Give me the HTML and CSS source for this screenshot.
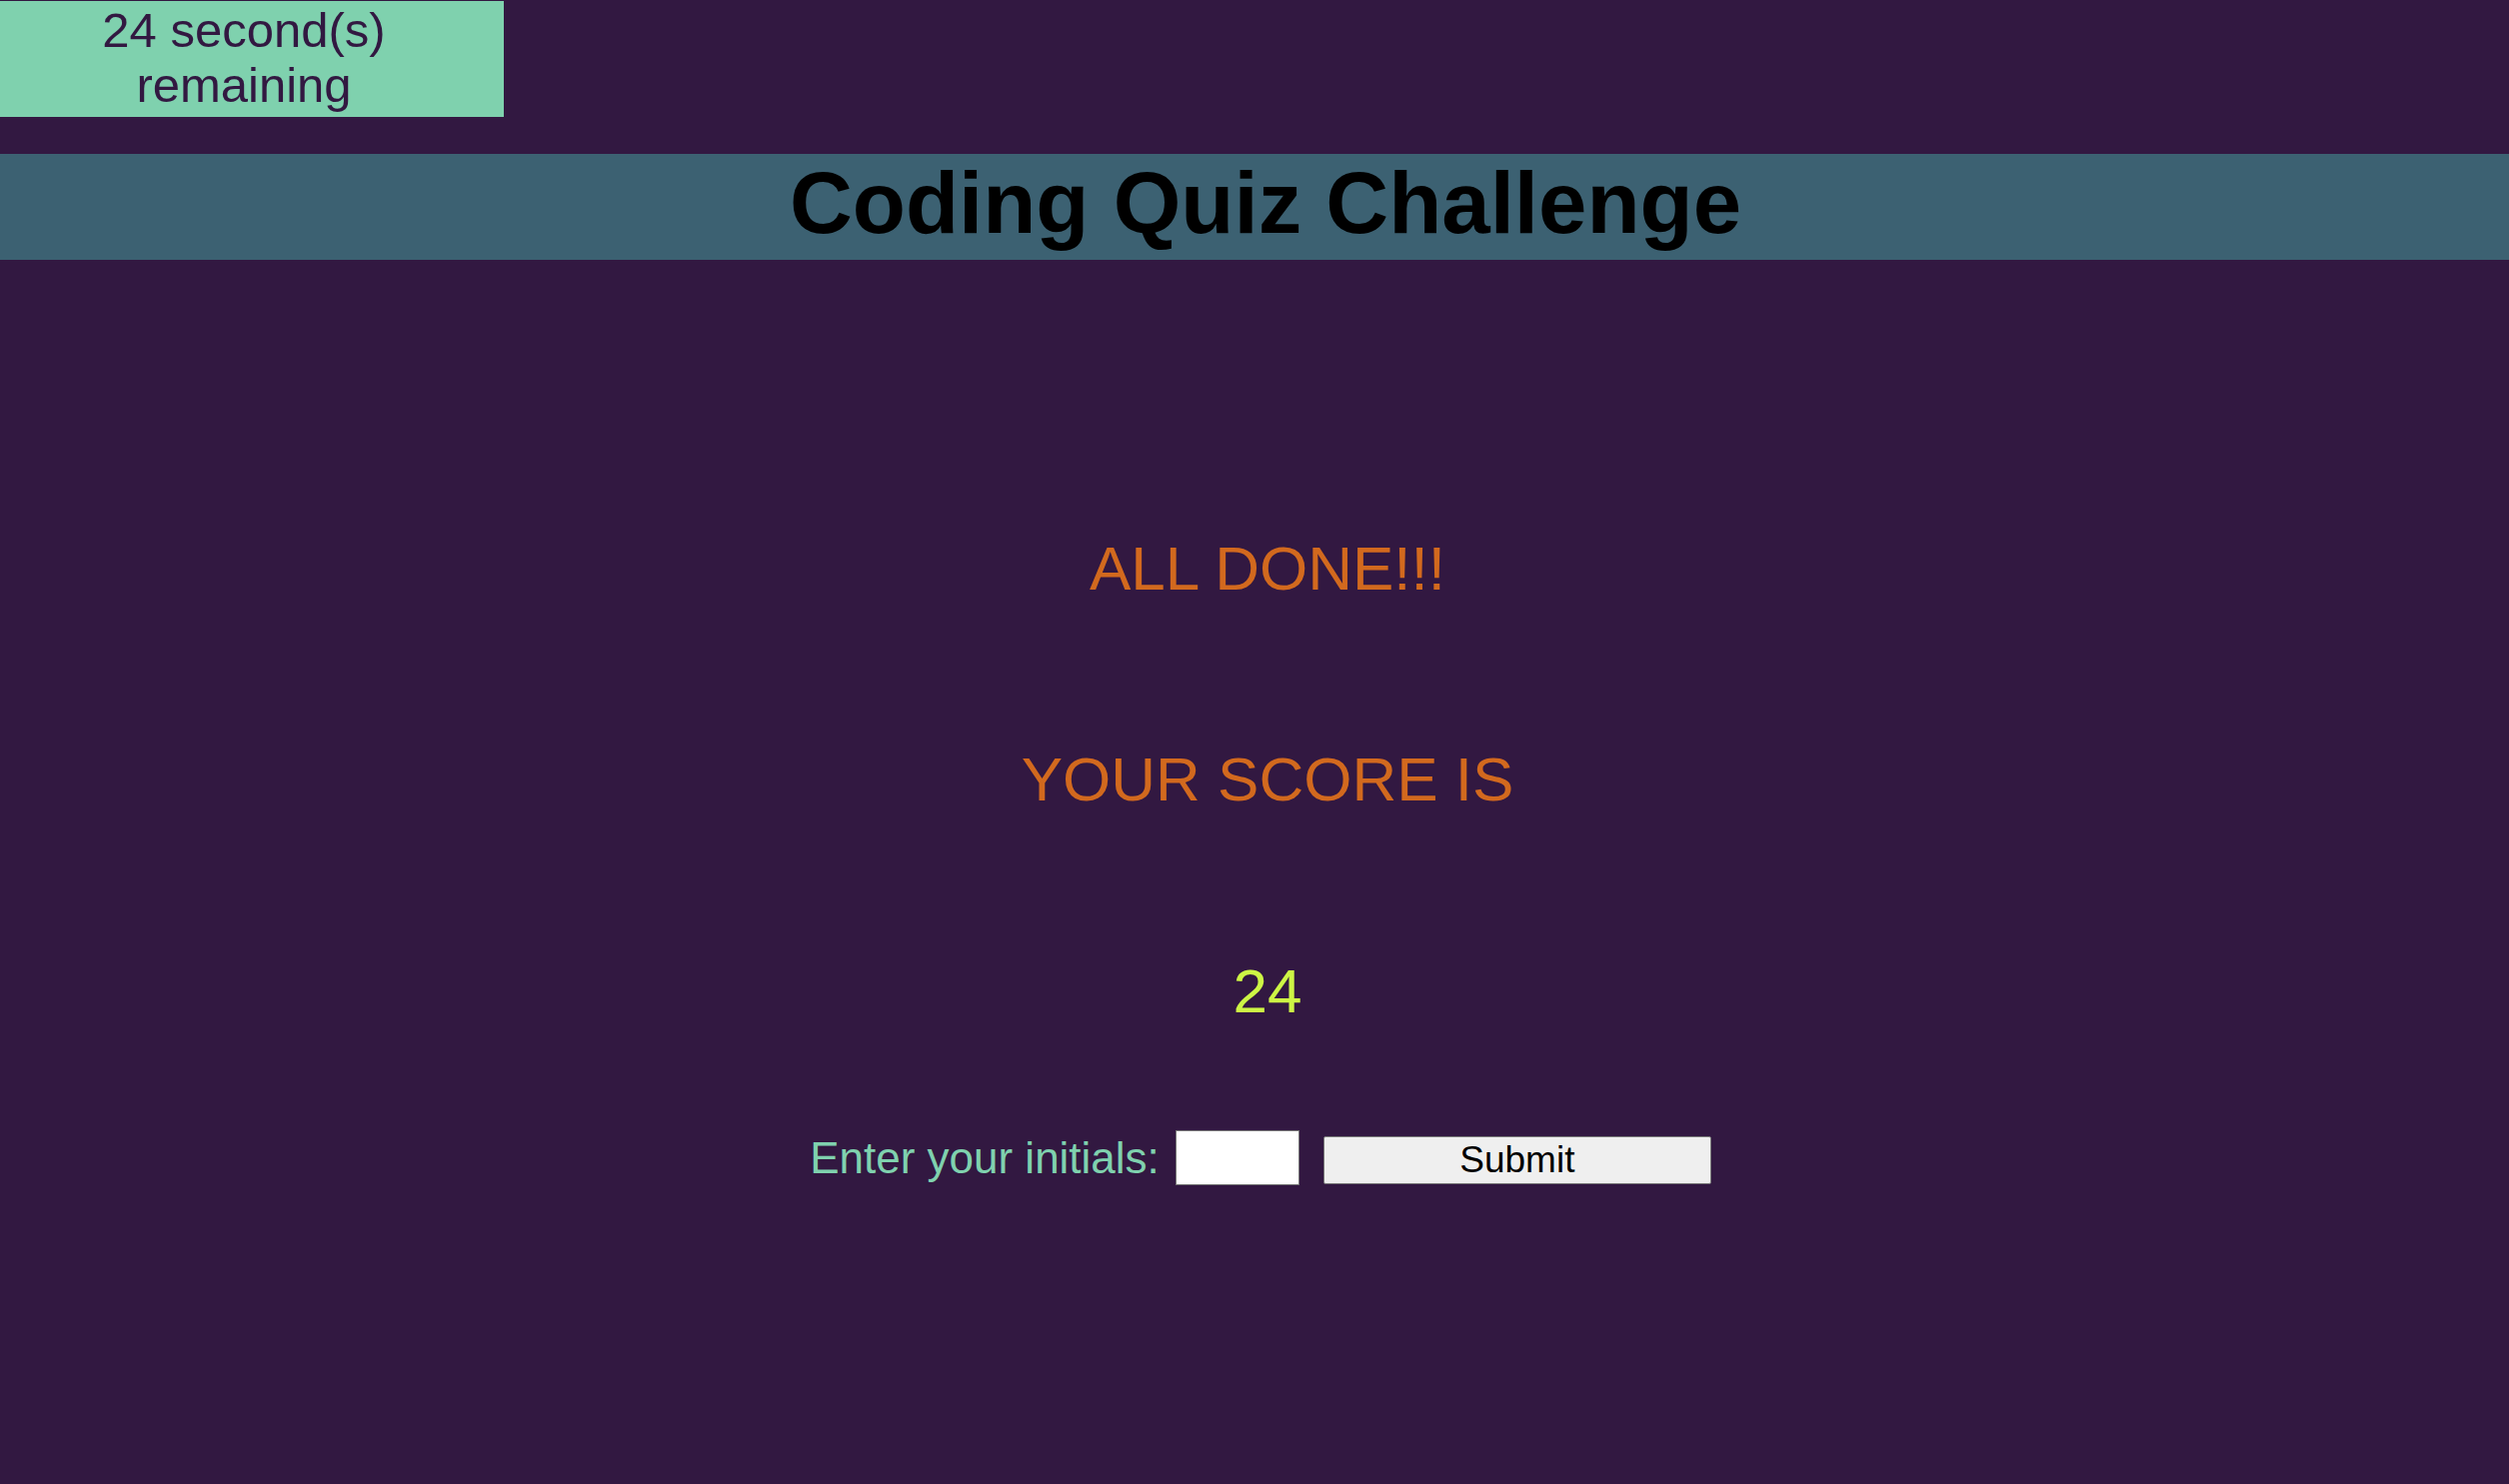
FILE: index.html
```html
<!DOCTYPE html>
<html lang="en">
<head>
<meta charset="utf-8">
<title>Coding Quiz Challenge</title>
<link rel="stylesheet" href="styles.css">
</head>
<body>
  <div class="timer">24 second(s) remaining</div>
  <header class="banner">
    <h1 class="title">Coding Quiz Challenge</h1>
  </header>
  <main class="content">
    <h2 class="heading heading-first">ALL DONE!!!</h2>
    <h2 class="heading">YOUR SCORE IS</h2>
    <p class="score">24</p>
    <form class="initials-row">
      <label class="initials-label" for="initials">Enter your initials:</label>
      <input class="initials-input" id="initials" type="text">
      <button class="submit-btn" type="button">Submit</button>
    </form>
  </main>
</body>
</html>
```

FILE: styles.css
```css
html, body {
  margin: 0;
  padding: 0;
}

body {
  background: #321841;
  padding-top: 1px;
  font-family: "Liberation Sans", Arial, sans-serif;
  min-height: 1484px;
}

.timer {
  box-sizing: border-box;
  width: 504px;
  height: 116px;
  padding: 2px 16px 4px 0;
  background: #7fd1ae;
  color: #321841;
  font-size: 49px;
  line-height: 55px;
  text-align: center;
}

.banner {
  box-sizing: border-box;
  margin-top: 37px;
  height: 106px;
  padding: 0 0 8px 22px;
  background: #3c6172;
}

.title {
  margin: 0;
  font-size: 87px;
  font-weight: bold;
  line-height: 98px;
  text-align: center;
  color: #000;
}

.content {
  padding-left: 26px;
  display: flex;
  flex-direction: column;
  align-items: stretch;
}

.heading {
  margin: 139px 0 0;
  font-size: 62px;
  font-weight: normal;
  line-height: 72px;
  color: #d2691e;
  text-align: center;
}

.heading-first {
  margin-top: 273px;
}

.score {
  margin: 140px 0 0;
  font-size: 62px;
  line-height: 72px;
  color: #cdf545;
  text-align: center;
}

.initials-row {
  margin: 103px 0 0;
  padding-right: 14px;
  display: flex;
  justify-content: center;
  align-items: flex-start;
}

.initials-label {
  margin-top: 3px;
  font-size: 44px;
  line-height: 50px;
  color: #7fd1ae;
}

.initials-input {
  box-sizing: border-box;
  margin: 0 0 0 16px;
  width: 124px;
  height: 55px;
  padding: 2px 4px;
  border: 1px solid #767676;
  background: #fff;
  font-size: 30px;
  font-family: "Liberation Sans", Arial, sans-serif;
}

.submit-btn {
  box-sizing: border-box;
  margin: 6px 0 0 24px;
  width: 388px;
  height: 48px;
  padding: 0;
  border: 1px solid #767676;
  border-radius: 2px;
  background: #efefef;
  color: #000;
  font-family: "Liberation Sans", Arial, sans-serif;
  font-size: 37px;
  line-height: 44px;
}
```
